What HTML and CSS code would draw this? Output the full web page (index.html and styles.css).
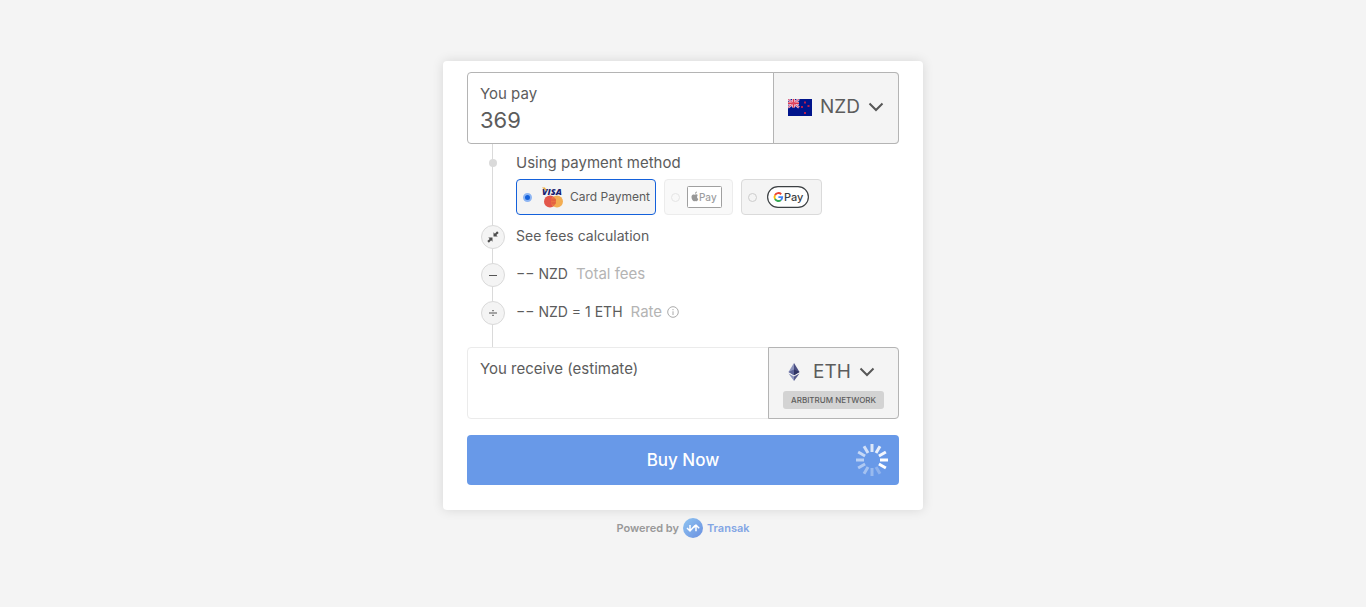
FILE: index.html
```html
<!DOCTYPE html>
<html lang="en">
<head>
<meta charset="utf-8">
<meta name="viewport" content="width=device-width, initial-scale=1">
<title>Transak</title>
<link rel="stylesheet" href="styles.css">
</head>
<body>
<main class="page">
  <form class="card">
    <div class="amount">
      <div class="amount-main">
        <label class="amount-label" for="pay">You pay</label>
        <input class="amount-input" id="pay" type="text" inputmode="decimal" value="369">
      </div>
      <div class="currency currency-fiat">
        <div class="currency-row">
          <svg class="flag" viewBox="0 0 24 17" aria-hidden="true">
            <rect width="24" height="17" fill="#00148c"/>
            <path d="M0 0L11 8.5M11 0L0 8.5" stroke="#d9b3d4" stroke-width="2.6"/>
            <path d="M5.5 0V8.5M0 4.2H11" stroke="#f0c8d8" stroke-width="3"/>
            <path d="M5.5 0V8.5M0 4.2H11" stroke="#e0384e" stroke-width="1.4"/>
            <path d="M0 0L11 8.5M11 0L0 8.5" stroke="#dd5570" stroke-width=".9"/>
            <g fill="#b61c50"><rect x="16" y="2.500" width="2" height="2"/><rect x="19.500" y="6" width="2" height="2"/><rect x="13" y="7" width="2" height="2"/><rect x="16" y="13" width="2" height="2"/></g>
          </svg>
          <select class="currency-select" aria-label="Fiat currency"><option>NZD</option></select>
          <svg class="chevron" viewBox="0 0 16 16" aria-hidden="true"><path d="M1.500 4.500l6.500 6.500 6.500-6.500"/></svg>
        </div>
      </div>
    </div>

    <div class="steps">
      <div class="step step-method">
        <span class="marker"><span class="dot"></span></span>
        <fieldset class="methods">
          <legend class="methods-title">Using payment method</legend>
          <div class="methods-list">
            <label class="method method-active">
              <input class="radio" type="radio" name="method" checked>
              <svg class="logo-card" viewBox="0 -2 24 26" aria-hidden="true">
                <text class="visa" x="1" y="9">VISA</text>
                <path d="M1 1.600h3l2 4z" fill="#eba834"/>
                <circle cx="9" cy="15.500" r="6" fill="#e3574b"/>
                <circle cx="16" cy="15.500" r="6" fill="#f3ad52"/>
                <path d="M12.500 10.600a6 6 0 0 1 0 9.800a6 6 0 0 1 0-9.800z" fill="#ea7043"/>
                <path d="M10 14h5M10 17h5" stroke="#d8463f" stroke-width=".6"/>
              </svg>
              <span class="method-name">Card Payment</span>
            </label>
            <label class="method method-disabled">
              <input class="radio" type="radio" name="method" aria-label="Apple Pay" disabled>
              <svg class="logo-apple" viewBox="0 0 35 22" aria-hidden="true">
                <rect x=".5" y=".5" width="34" height="21" rx="1" fill="#fff" stroke="#444"/>
                <path d="M10.800 9.100c-.7-.9-1.700-.9-2.400-.5-.5.300-.7.300-1.200 0C5.800 7.900 4.500 9 4.500 11c0 1.900 1.200 4.200 2.400 4.200.5 0 .7-.3 1.300-.3s.8.300 1.300.3c.8 0 1.500-1.300 1.800-2.200-1.500-.6-1.700-2.800-.5-3.900zM8 7.800c-.1-1.200.9-2.200 1.900-2.300.1 1.100-.8 2.300-1.900 2.300z" fill="#333"/>
                <text class="pay pay-apple" x="12" y="15">Pay</text>
              </svg>
            </label>
            <label class="method">
              <input class="radio" type="radio" name="method" aria-label="Google Pay">
              <svg class="logo-google" viewBox="0 0 42 22" aria-hidden="true">
                <rect x=".6" y=".6" width="40.800" height="20.800" rx="10.400" fill="#fff" stroke="#3c4043" stroke-width="1.200"/>
                <g fill="none" stroke-width="1.900">
                  <path d="M14.200 8.200A3.900 3.900 0 0 0 8 9.200" stroke="#ea4335"/>
                  <path d="M8 9.200a3.900 3.900 0 0 0 0 3.900" stroke="#fbbc04"/>
                  <path d="M8 13.100a3.900 3.900 0 0 0 5.900 1" stroke="#34a853"/>
                  <path d="M13.900 14.100a3.900 3.900 0 0 0 1.300-3H11.400" stroke="#4285f4"/>
                </g>
                <text class="pay" x="17" y="15">Pay</text>
              </svg>
            </label>
          </div>
        </fieldset>
      </div>
      <div class="step">
        <span class="marker marker-ring">
          <svg class="glyph" viewBox="0 0 12 12" aria-hidden="true"><path d="M6.500 5.500V1.300l1.400 1.400L10.100.3l1.600 1.600L9.300 4.100l1.400 1.400zM5.500 6.500v4.200L4.100 9.300l-2.200 2.400L.3 10.100l2.400-2.200-1.400-1.400z" fill="#4d4d4d"/></svg>
        </span>
        <button class="fees" type="button">See fees calculation</button>
      </div>
      <div class="step">
        <span class="marker marker-ring"><svg class="glyph" viewBox="0 0 12 12" aria-hidden="true"><path d="M2 6.500h8" stroke="#555"/></svg></span>
        <p class="line"><span>−− NZD</span><span class="muted">Total fees</span></p>
      </div>
      <div class="step">
        <span class="marker marker-ring"><svg class="glyph" viewBox="0 0 12 12" aria-hidden="true"><path d="M2 6h8" stroke="#555"/><path d="M5.300 3h1.400v1.200H5.300zM5.300 7.800h1.400V9H5.300z" fill="#555"/></svg></span>
        <p class="line"><span>−− NZD = 1 ETH</span><span class="muted">Rate
          <svg class="info" viewBox="0 0 12 12" aria-hidden="true"><circle cx="6" cy="6" r="5.300"/><path d="M6 5.300V9M6 3v1.200"/></svg></span></p>
      </div>
    </div>

    <div class="amount amount-receive">
      <div class="amount-main">
        <label class="amount-label" for="receive">You receive (estimate)</label>
        <input class="amount-input" id="receive" type="text" readonly>
      </div>
      <div class="currency currency-crypto">
        <div class="currency-row">
          <svg class="eth" viewBox="0 0 12 18" aria-hidden="true">
            <path d="M6 0L.5 9 6 12.200z" fill="#8d94bd"/><path d="M6 0l5.500 9L6 12.200z" fill="#4b4f82"/>
            <path d="M.5 9L6 6.600V12.200z" fill="#5d6499"/><path d="M11.500 9L6 6.600V12.200z" fill="#303464"/>
            <path d="M.5 10.400L6 13.600V18z" fill="#8d94bd"/><path d="M11.500 10.400L6 13.600V18z" fill="#555a8c"/>
          </svg>
          <select class="currency-select" aria-label="Cryptocurrency"><option>ETH</option></select>
          <svg class="chevron" viewBox="0 0 16 16" aria-hidden="true"><path d="M1.500 4.500l6.500 6.500 6.500-6.500"/></svg>
        </div>
        <span class="network">ARBITRUM NETWORK</span>
      </div>
    </div>

    <button class="buy" type="submit">
      <span class="buy-text">Buy Now</span>
      <svg class="spinner" viewBox="-16 -16 32 32" aria-hidden="true">
        <g stroke="#fff" stroke-width="3">
          <path d="M8 0h8"/>
          <path d="M8 0h8" transform="rotate(30)"/>
          <path d="M8 0h8" transform="rotate(60)" opacity=".25"/>
          <path d="M8 0h8" transform="rotate(90)" opacity=".32"/>
          <path d="M8 0h8" transform="rotate(120)" opacity=".4"/>
          <path d="M8 0h8" transform="rotate(150)" opacity=".47"/>
          <path d="M8 0h8" transform="rotate(180)" opacity=".54"/>
          <path d="M8 0h8" transform="rotate(210)" opacity=".62"/>
          <path d="M8 0h8" transform="rotate(240)" opacity=".7"/>
          <path d="M8 0h8" transform="rotate(270)" opacity=".77"/>
          <path d="M8 0h8" transform="rotate(300)" opacity=".85"/>
          <path d="M8 0h8" transform="rotate(330)" opacity=".93"/>
        </g>
      </svg>
    </button>
  </form>

  <footer class="powered">
    <span>Powered by</span>
    <svg class="transak" viewBox="0 0 20 20" aria-hidden="true">
      <defs><linearGradient id="badge" x1="0" y1="0" x2="1" y2="1"><stop offset="0" stop-color="#8fc5f2"/><stop offset="1" stop-color="#6a8fe0"/></linearGradient></defs>
      <circle cx="10" cy="10" r="10" fill="url(#badge)"/>
      <path d="M4 10l3 3 5-5.500M7 7v6M10.500 9.800L13 7l3.200 3.200M13 7v6.200" fill="none" stroke="#fff" stroke-width="1.500"/>
    </svg>
    <a class="brand" href="#">Transak</a>
  </footer>
</main>
</body>
</html>
```

FILE: styles.css
```css
* { box-sizing: border-box; }

body {
  margin: 0;
  background: #f4f4f4;
  color: #5c5c5c;
  font-family: Inter, "Liberation Sans", sans-serif;
  font-size: 14px;
  line-height: 20px;
}

button, input, select { font: inherit; color: inherit; }

.page {
  min-height: 100vh;
  display: flex;
  flex-direction: column;
  align-items: center;
  justify-content: center;
  padding: 8px 8px 16px;
}

.card {
  width: 100%;
  max-width: 480px;
  padding: 11px 24px 25px;
  border-radius: 4px;
  background: #fff;
  box-shadow: 0 0 12px rgba(0, 0, 0, .12);
}

.amount {
  display: flex;
  min-height: 72px;
  border: 1px solid #b4b4b4;
  border-radius: 4px;
}

.amount-receive { border-color: #ebebeb; }

.amount-main {
  flex: 1;
  min-width: 0;
  padding: 11px 12px 0;
}

.amount-label {
  display: block;
  font-size: 15px;
}

.amount-input {
  display: block;
  width: 100%;
  height: 32px;
  padding: 0;
  border: 0;
  outline: 0;
  background: none;
  font-size: 22px;
}

.currency {
  display: flex;
  flex-direction: column;
  justify-content: center;
  gap: 4px;
  margin: -1px;
  border: 1px solid #b4b4b4;
  border-radius: 0 4px 4px 0;
  background: #f4f4f4;
}

.currency-fiat { padding: 0 14px 2px; }
.currency-crypto { padding: 0 14px; }

.currency-row {
  display: flex;
  align-items: center;
  gap: 8px;
}

.currency-crypto .currency-row { padding: 0 5px; }

.currency-select {
  appearance: none;
  height: 30px;
  padding: 0;
  border: 0;
  outline: 0;
  background: none;
  font-size: 19px;
}

.currency-crypto .currency-select { margin-left: 5px; }

.flag { width: 24px; height: 17px; }
.eth { width: 12px; height: 18px; }

.chevron {
  width: 16px;
  height: 16px;
  fill: none;
  stroke: #575757;
  stroke-width: 2;
}

.network {
  padding: 0 8px;
  border-radius: 3px;
  background: #d3d3d3;
  font-size: 8px;
  font-weight: 500;
  line-height: 18px;
  text-align: center;
}

.steps {
  display: flex;
  flex-direction: column;
  gap: 14px;
  padding: 9px 0 22px 14px;
  background: linear-gradient(#dadada, #dadada) 25px 0 / 1px 100% no-repeat;
}

.step {
  display: flex;
  gap: 11px;
}

.step-method { margin-bottom: -4px; }

.marker {
  flex: none;
  display: flex;
  align-items: center;
  justify-content: center;
  width: 24px;
  height: 24px;
}

.step-method .marker { height: 20px; }

.marker-ring {
  border: 1px solid #dadada;
  border-radius: 50%;
  background: #f4f4f4;
}

.dot {
  width: 8px;
  height: 8px;
  border-radius: 50%;
  background: #dadada;
}

.glyph { width: 12px; height: 12px; }

.methods {
  min-width: 0;
  margin: 0;
  padding: 0;
  border: 0;
}

.methods-title {
  padding: 0;
  font-size: 15px;
}

.methods-list {
  display: flex;
  flex-wrap: wrap;
  gap: 8px;
  padding-top: 6px;
}

.method {
  display: flex;
  align-items: center;
  height: 36px;
  padding: 0 12px 0 6px;
  border: 1px solid #dadada;
  border-radius: 4px;
  background: #f4f4f4;
}

.method-active { padding-right: 5px; border-color: #1461db; }
.method-disabled { padding-right: 10px; opacity: .5; }

.radio {
  appearance: none;
  flex: none;
  width: 9px;
  height: 9px;
  margin: 0;
  border: 1px solid #ccc;
  border-radius: 50%;
}

.radio:checked {
  border: 2px solid #8db5f3;
  background: #1461db;
}

.logo-card { width: 24px; height: 26px; margin: 0 5px 0 9px; }
.logo-apple { width: 35px; height: 22px; margin-left: 7px; }
.logo-google { width: 42px; height: 22px; margin-left: 10px; }

.visa {
  fill: #1a1f71;
  font: italic 800 9px "Open Sans", sans-serif;
}

.pay {
  fill: #3c4043;
  font: 500 11px Inter, sans-serif;
}

.pay-apple { font-size: 10px; }

.method-name { font-size: 12px; }

.fees {
  height: 22px;
  padding: 0;
  border: 0;
  background: none;
}

.line {
  display: flex;
  align-items: baseline;
  gap: 8px;
  margin: 0;
  line-height: 22px;
}

.muted {
  display: flex;
  align-items: center;
  gap: 5px;
  color: #b4b4b4;
  font-size: 15px;
}

.info {
  width: 12px;
  height: 12px;
  fill: none;
  stroke: #aaa;
}

.buy {
  display: grid;
  grid-template-columns: 1fr auto 1fr;
  align-items: center;
  width: 100%;
  height: 50px;
  margin-top: 16px;
  padding: 0 11px;
  border: 0;
  border-radius: 4px;
  background: #6899e8;
  color: #fff;
  font-size: 17px;
  font-weight: 500;
}

.buy-text { grid-column: 2; }

.spinner {
  justify-self: end;
  width: 32px;
  height: 32px;
}

.powered {
  display: flex;
  align-items: center;
  gap: 4px;
  padding-top: 8px;
  color: #999;
  font-size: 11px;
  font-weight: 600;
}

.transak { width: 20px; height: 20px; }

.brand {
  color: #82a5e4;
  text-decoration: none;
}
```
